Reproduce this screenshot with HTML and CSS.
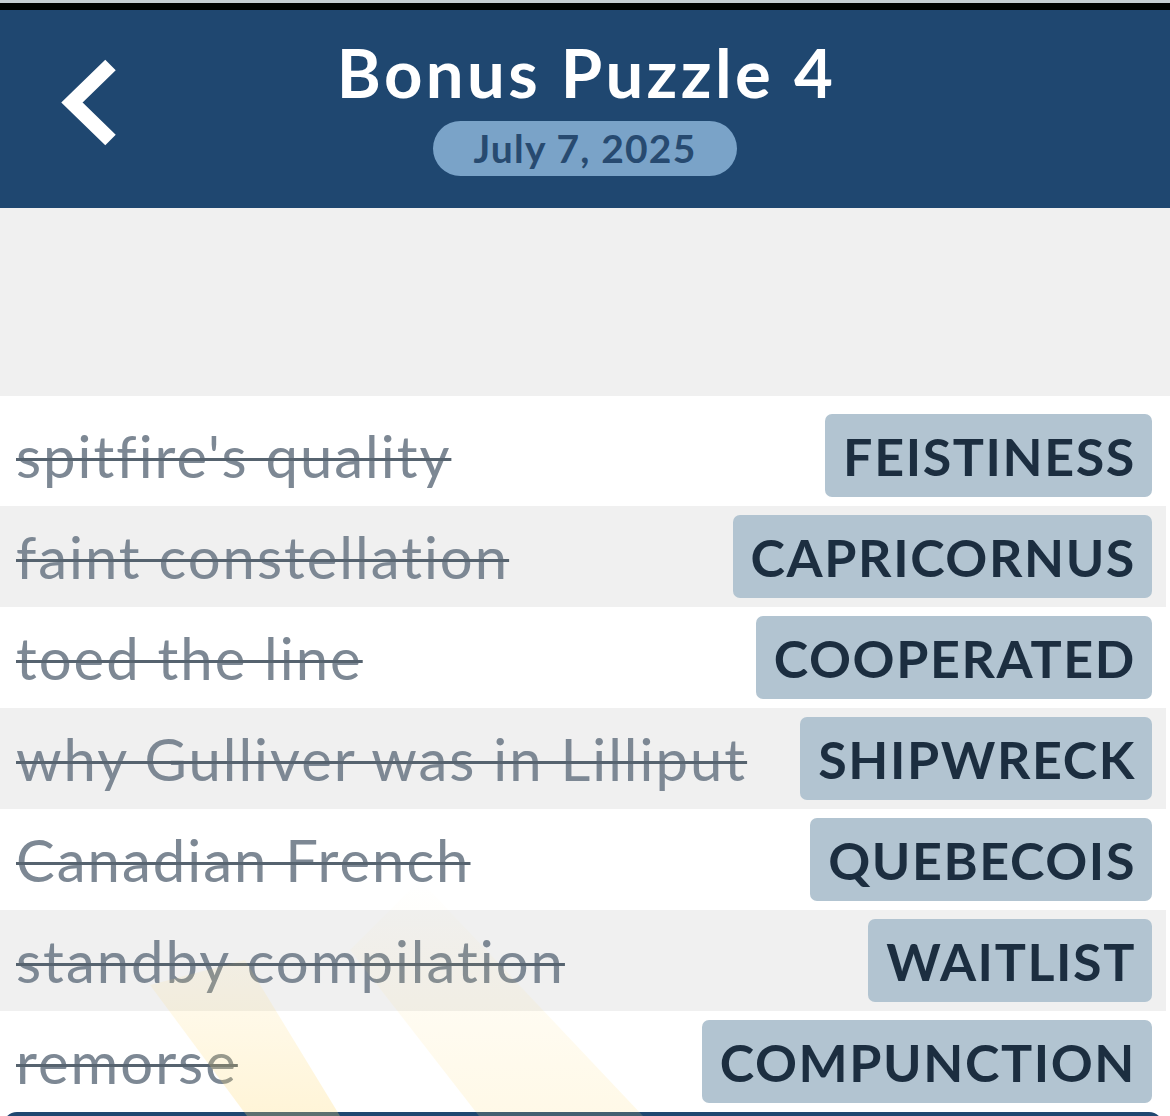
FILE: index.html
```html
<!DOCTYPE html>
<html>
<head>
<meta charset="utf-8">
<link rel="stylesheet" href="styles.css">
</head>
<body>
<div class="topline"></div>
<div class="blackbar"></div>
<header class="header">
  <svg class="back" width="70" height="100" viewBox="55 50 70 100">
    <polyline points="110.5,65 72,102.5 110.5,140" fill="none" stroke="#ffffff" stroke-width="15" stroke-linejoin="miter" stroke-linecap="butt"/>
  </svg>
  <div class="titles">
    <h1 class="title">Bonus Puzzle 4</h1>
    <div class="date">July 7, 2025</div>
  </div>
</header>
<div class="spacer"></div>
<main class="list">
  <svg class="rays" width="1170" height="720" viewBox="0 396 1170 720">
    <defs>
      <linearGradient id="fade" x1="0" y1="880" x2="0" y2="1116" gradientUnits="userSpaceOnUse">
        <stop offset="0" stop-color="#ffd970" stop-opacity="0"/>
        <stop offset="1" stop-color="#ffd970" stop-opacity="0.28"/>
      </linearGradient>
    </defs>
    <polygon points="150,985 245,960 340,1116 247,1116" fill="url(#fade)"/>
    <polygon points="350,950 420,880 643,1116 479,1116" fill="url(#fade)" opacity="0.6"/>
  </svg>
  <div class="row"><span class="clue">spitfire's quality</span><span class="answer">FEISTINESS</span></div>
  <div class="row alt"><span class="clue">faint constellation</span><span class="answer">CAPRICORNUS</span></div>
  <div class="row"><span class="clue">toed the line</span><span class="answer">COOPERATED</span></div>
  <div class="row alt"><span class="clue">why Gulliver was in Lilliput</span><span class="answer">SHIPWRECK</span></div>
  <div class="row"><span class="clue">Canadian French</span><span class="answer">QUEBECOIS</span></div>
  <div class="row alt"><span class="clue">standby compilation</span><span class="answer">WAITLIST</span></div>
  <div class="row"><span class="clue">remorse</span><span class="answer">COMPUNCTION</span></div>
  <div class="footer-bar"></div>
</main>
</body>
</html>
```
FILE: styles.css
```css
* { box-sizing: border-box; }
html, body { margin: 0; padding: 0; }
body {
  background: #f0f0f0;
  font-family: Lato, "Noto Sans", "Liberation Sans", sans-serif;
  overflow: hidden;
  height: 1116px;
}
.topline { height: 3px; background: #c6ccd2; }
.blackbar { height: 7px; background: #000; }
.header {
  height: 198px;
  background: #1f4770;
  position: relative;
  display: flex;
  justify-content: center;
}
.back {
  position: absolute;
  left: 55px;
  top: 40px;
}
.titles {
  display: flex;
  flex-direction: column;
  align-items: center;
}
.title {
  margin: 0;
  margin-top: 22px;
  color: #ffffff;
  font-size: 67px;
  font-weight: 700;
  line-height: 80px;
  letter-spacing: 3.4px;
  padding-left: 3px;
}
.date {
  margin-top: 9px;
  width: 304px;
  height: 55px;
  border-radius: 28px;
  background: #7aa3c8;
  color: #274a70;
  font-size: 39px;
  font-weight: 700;
  letter-spacing: 1.2px;
  display: flex;
  align-items: center;
  justify-content: center;
  padding-bottom: 2px;
}
.spacer { height: 188px; }
.list {
  position: relative;
  background: #ffffff;
  padding-top: 9px;
  padding-right: 4px;
  height: 720px;
  overflow: hidden;
}
.rays {
  position: absolute;
  left: 0;
  top: 0;
  pointer-events: none;
  z-index: 2;
}
.row {
  position: relative;
  height: 101px;
  display: flex;
  align-items: center;
  justify-content: space-between;
  padding-left: 16px;
  padding-right: 14px;
}
.row.alt { background: #f0f0f0; }
.clue {
  color: #7d8894;
  font-size: 58px;
  font-weight: 400;
  text-decoration: line-through;
  text-decoration-color: #56636f;
  text-decoration-thickness: 3px;
  white-space: nowrap;
  letter-spacing: 2px;
}
.answer {
  height: 83px;
  display: flex;
  align-items: center;
  padding: 0 16px 0 18px;
  background: #b2c4d1;
  border-radius: 7px;
  color: #1c2e40;
  font-size: 52px;
  font-weight: 700;
  letter-spacing: 1.6px;
  white-space: nowrap;
}
.footer-bar {
  margin: 0 3px 0 3px;
  height: 40px;
  background: #1f4770;
  border-radius: 14px 14px 0 0;
}
```
